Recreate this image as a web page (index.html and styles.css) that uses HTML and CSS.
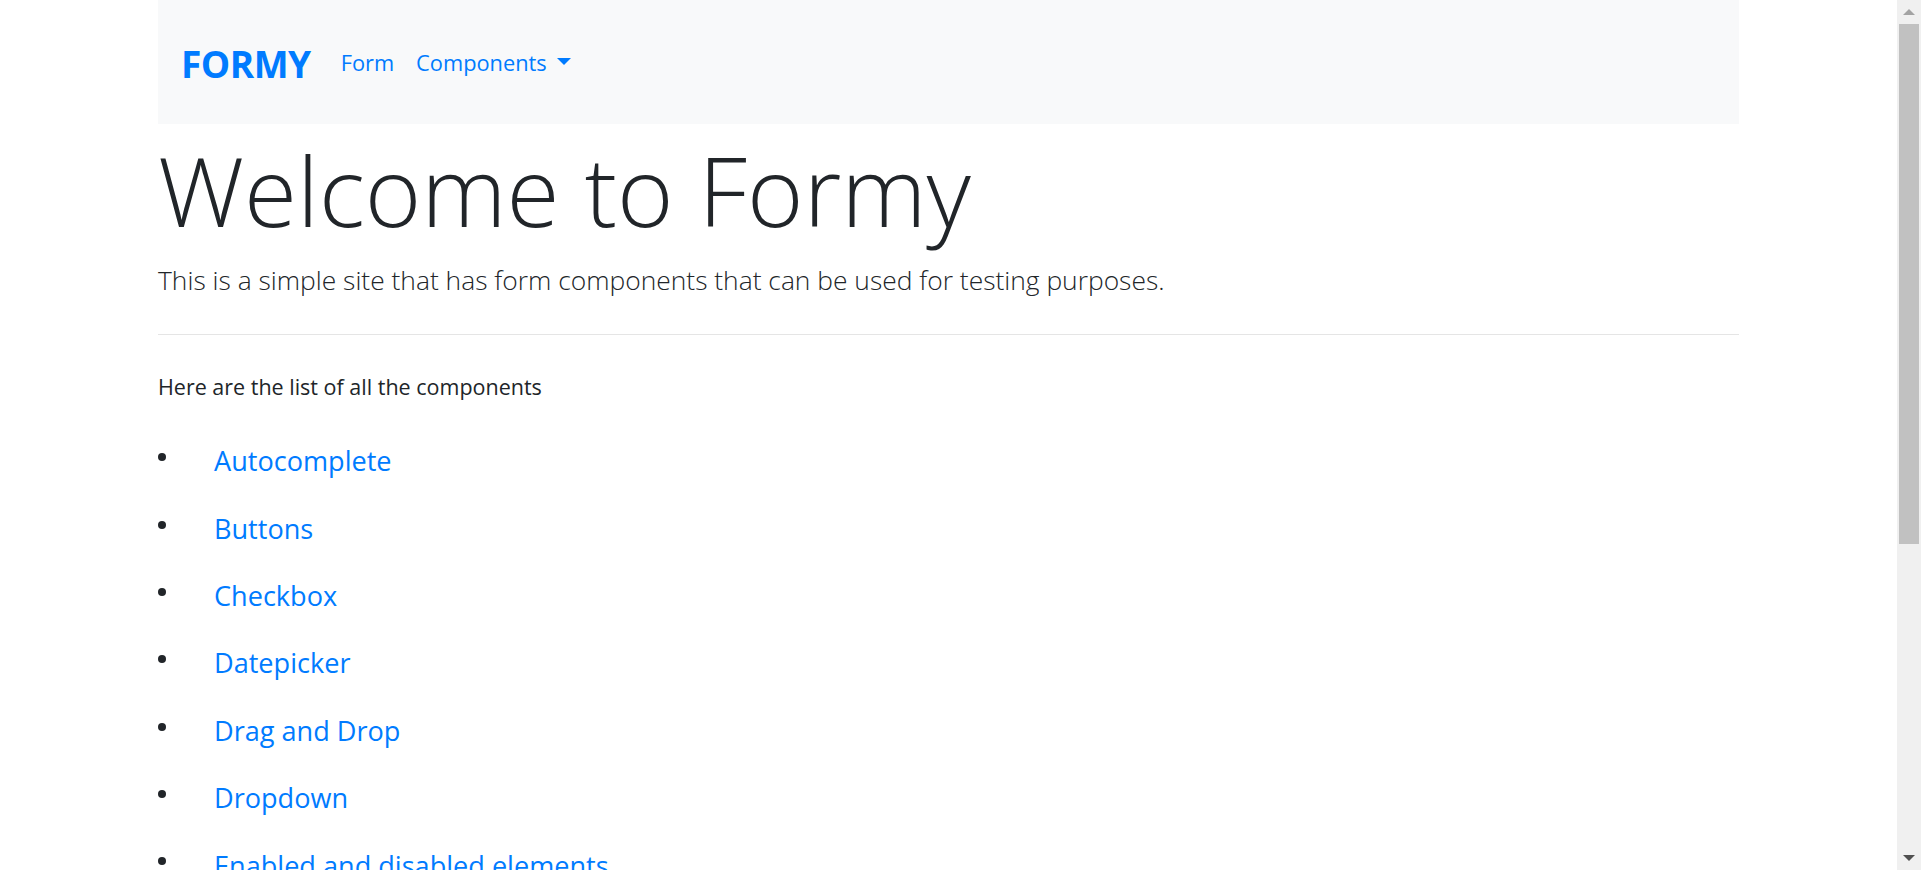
FILE: index.html
```html
<!DOCTYPE html>
<html lang="en">
<head>
<meta charset="utf-8">
<title>Formy</title>
<link rel="stylesheet" href="styles.css">
</head>
<body>
<div class="window">
  <div class="viewport">
    <div class="container">
      <nav class="navbar">
        <a class="brand" href="#">FORMY</a>
        <a class="nav-link" href="#">Form</a>
        <a class="nav-link dropdown" href="#">Components<span class="caret"></span></a>
      </nav>
      <div class="jumbo">
        <h1 class="display">Welcome to Formy</h1>
        <p class="lead">This is a simple site that has form components that can be used for testing purposes.</p>
        <hr class="rule">
        <p class="intro">Here are the list of all the components</p>
        <ul class="components">
          <li><a href="#">Autocomplete</a></li>
          <li><a href="#">Buttons</a></li>
          <li><a href="#">Checkbox</a></li>
          <li><a href="#">Datepicker</a></li>
          <li><a href="#">Drag and Drop</a></li>
          <li><a href="#">Dropdown</a></li>
          <li><a href="#">Enabled and disabled elements</a></li>
          <li><a href="#">File Upload</a></li>
          <li><a href="#">Key and Mouse Press</a></li>
          <li><a href="#">Modal</a></li>
          <li><a href="#">Page Scroll</a></li>
          <li><a href="#">Radio Button</a></li>
          <li><a href="#">Switch Window</a></li>
          <li><a href="#">Complete Web Form</a></li>
        </ul>
      </div>
    </div>
  </div>
  <div class="scrollbar">
    <div class="sb-btn"><span class="arrow-up"></span></div>
    <div class="sb-track"><div class="sb-thumb"></div></div>
    <div class="sb-btn"><span class="arrow-down"></span></div>
  </div>
</div>
</body>
</html>
```

FILE: styles.css
```css
html, body {
  margin: 0;
  padding: 0;
  height: 100%;
  overflow: hidden;
  background: #fff;
}

body {
  font-family: "Open Sans", "Noto Sans", "Liberation Sans", sans-serif;
  font-size: 21.5px;
  line-height: 1.5;
  color: #212529;
}

a {
  color: #007bff;
  text-decoration: none;
}

.window {
  display: flex;
  height: 870px;
}

.viewport {
  flex: 1;
  overflow: hidden;
}

.container {
  width: 1581px;
  margin: 0 auto;
}

/* navbar */
.navbar {
  box-sizing: border-box;
  display: flex;
  align-items: center;
  height: 124px;
  padding: 2px 23px 0;
  background: #f8f9fa;
}

.brand {
  font-size: 37px;
  font-weight: 700;
  letter-spacing: -0.5px;
  line-height: 1;
  margin-right: 19px;
}

.nav-link {
  display: inline-flex;
  align-items: center;
  font-size: 21.8px;
  line-height: 1.5;
  padding: 0 11px;
}

.caret {
  display: inline-block;
  width: 0;
  height: 0;
  margin-left: 10px;
  margin-top: -4px;
  border-top: 7px solid #007bff;
  border-left: 7px solid transparent;
  border-right: 7px solid transparent;
}

/* jumbotron */
.display {
  margin: 8px 0 0;
  font-size: 96.5px;
  font-weight: 300;
  line-height: 1.2;
}

.lead {
  margin: 13px 0 0;
  font-size: 26.4px;
  font-weight: 300;
  line-height: 1.5;
}

.rule {
  margin: 33.5px 0 36.5px;
  border: 0;
  border-top: 1px solid rgba(0, 0, 0, 0.1);
  height: 0;
}

.intro {
  margin: 0 0 23.5px;
}

.components {
  list-style: none;
  margin: 0;
  padding: 0;
}

.components li {
  display: flex;
  align-items: flex-start;
}

.components li::before {
  content: "";
  flex: none;
  width: 8px;
  height: 8px;
  margin-top: 26px;
  margin-right: 48px;
  border-radius: 50%;
  background: #212529;
}

.components a {
  font-size: 27.1px;
  line-height: 41px;
  padding: 13.2px 0;
}

/* scrollbar */
.scrollbar {
  flex: none;
  width: 24px;
  display: flex;
  flex-direction: column;
  background: #f0f0f0;
}

.sb-btn {
  height: 24px;
  display: flex;
  align-items: center;
  justify-content: center;
}

.arrow-up {
  width: 0;
  height: 0;
  border-left: 6px solid transparent;
  border-right: 6px solid transparent;
  border-bottom: 6px solid #a3a3a3;
}

.arrow-down {
  width: 0;
  height: 0;
  border-left: 6px solid transparent;
  border-right: 6px solid transparent;
  border-top: 6px solid #505050;
}

.sb-track {
  flex: 1;
  padding: 0 2px;
}

.sb-thumb {
  height: 520px;
  background: #c1c1c1;
}
```
